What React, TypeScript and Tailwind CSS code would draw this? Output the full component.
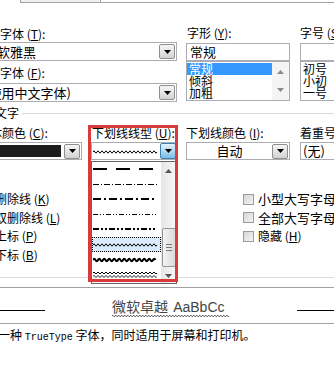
import React from "react";

// smooth wave path, used for the wavy underline samples
function wave(w: number, y: number, a: number, p: number) {
  let d = `M0 ${y} Q${p / 4} ${y - a * 2} ${p / 2} ${y}`;
  for (let x = p; x <= w + 0.01; x += p / 2) d += ` T${x} ${y}`;
  return d;
}

const Tri = ({ up = false, color = "#000" }: { up?: boolean; color?: string }) => (
  <svg width="7" height="4" viewBox="0 0 7 4">
    <path d={up ? "M0 4h7L3.5 0z" : "M0 0h7L3.5 4z"} fill={color} />
  </svg>
);

const DropBtn = ({ pressed = false }: { pressed?: boolean }) => (
  <div
    className={
      pressed
        ? "w-[16px] h-[16px] shrink-0 flex items-center justify-center rounded-[2px] border border-[#3c7fb1] bg-gradient-to-b from-[#e5f4fc] to-[#77bce6]"
        : "w-[16px] h-[15px] shrink-0 flex items-center justify-center rounded-[2px] border border-[#8f8f8f] bg-gradient-to-b from-[#f6f6f6] to-[#d2d2d2]"
    }
  >
    <Tri />
  </div>
);

const Check = () => (
  <div className="w-[11px] h-[11px] shrink-0 border border-[#9c9c9c] bg-gradient-to-br from-[#d6d6d6] to-[#f4f4f4]" />
);

const Line = ({ dash, w = 1, y = 7.5 }: { dash: string; w?: number; y?: number }) => (
  <svg width="64" height="15">
    <line x1="0" y1={y} x2="64" y2={y} stroke="#000" strokeWidth={w} strokeDasharray={dash} />
  </svg>
);

const Wave = ({ w = 1, double = false }: { w?: number; double?: boolean }) => (
  <svg width="64" height="15">
    {double ? (
      <>
        <path d={wave(64, 6, 1, 4)} fill="none" stroke="#000" strokeWidth="1" />
        <path d={wave(64, 9.5, 1, 4)} fill="none" stroke="#000" strokeWidth="1" />
      </>
    ) : (
      <path d={wave(64, 8, 1.2, w > 1 ? 5 : 4)} fill="none" stroke="#000" strokeWidth={w} />
    )}
  </svg>
);

const SmallList = ({ items, selected }: { items: string[]; selected?: number }) => (
  <div className="h-[40px] border border-[#abadb3] bg-white flex">
    <div className="flex-1 pt-[1px]">
      {items.map((t, i) => (
        <div
          key={t}
          className={
            i === selected
              ? "h-[12px] leading-[12px] pl-[2px] bg-[#3399ff] text-white"
              : "h-[12px] leading-[12px] pl-[2px]"
          }
        >
          {t}
        </div>
      ))}
    </div>
    <div className="w-[17px] flex flex-col items-center justify-between py-[8px] bg-[#f4f4f4]">
      <Tri up color="#8a8a8a" />
      <Tri color="#8a8a8a" />
    </div>
  </div>
);

export default function App() {
  return (
    <div className="relative w-[334px] h-[366px] overflow-hidden bg-white text-[12px] leading-[14px] text-black font-['Noto_Sans_CJK_SC',sans-serif]">
      {/* bottom of the tab strip */}
      <div className="flex h-[3px]">
        <div className="ml-[20px] w-[81px] border-x border-b border-[#a3a3a3] bg-[#f0f0f0]" />
        <div className="flex-1 border-b border-[#a3a3a3]" />
      </div>

      {/* fonts / style / size */}
      <div className="flex mt-[23px]">
        <div className="-ml-[24px] w-[201px] shrink-0 pt-[1px]">
          <div className="h-[14px] whitespace-nowrap">
            中文字体 (<u>T</u>):
          </div>
          <div className="ml-[4px] mt-[1px] h-[19px] border border-[#abadb3] flex items-center pl-[3px] pr-[1px]">
            <span className="flex-1 text-[13px] whitespace-nowrap">微软雅黑</span>
            <DropBtn />
          </div>
          <div className="h-[14px] mt-[5px] whitespace-nowrap">
            西文字体 (<u>F</u>):
          </div>
          <div className="ml-[4px] mt-[3px] h-[19px] border border-[#abadb3] flex items-center pl-[3px] pr-[1px]">
            <span className="flex-1 text-[13px] whitespace-nowrap">(使用中文字体)</span>
            <DropBtn />
          </div>
        </div>

        <div className="ml-[9px] w-[104px] shrink-0">
          <div className="h-[14px] pl-[1px]">
            字形 (<u>Y</u>):
          </div>
          <div className="mt-[3px] h-[18px] border border-[#abadb3] pl-[3px] leading-[16px] text-[13px]">常规</div>
          <SmallList items={["常规", "倾斜", "加粗"]} selected={0} />
        </div>

        <div className="ml-[10px] w-[60px] shrink-0">
          <div className="h-[14px] whitespace-nowrap">
            字号 (<u>S</u>):
          </div>
          <div className="mt-[3px] h-[18px] border border-[#abadb3]" />
          <SmallList items={["初号", "小初", "一号"]} />
        </div>
      </div>

      {/* group heading */}
      <div className="flex items-center mt-[4px] h-[14px]">
        <span className="-ml-[29px] whitespace-nowrap">所有文字</span>
        <div className="flex-1 ml-[3px] border-t border-[#d5dce3]" />
      </div>

      {/* colour / underline row */}
      <div className="flex mt-[6px]">
        <div className="-ml-[22px] w-[104px] shrink-0">
          <div className="h-[14px] whitespace-nowrap">
            字体颜色 (<u>C</u>):
          </div>
          <div className="ml-[2px] mt-[2px] h-[18px] border border-[#abadb3] flex items-center pl-[2px] pr-[1px] gap-[3px]">
            <div className="flex-1 h-[12px] bg-[#1c1c1c]" />
            <DropBtn />
          </div>
        </div>

        <div className="ml-[9px] w-[86px] shrink-0">
          <div className="h-[14px] pl-[1px] whitespace-nowrap">
            下划线线型 (<u>U</u>):
          </div>
          <div className="mt-[2px] h-[18px] border border-[#abadb3] flex items-center pl-[1px]">
            <div className="flex-1 h-[15px]">
              <Wave />
            </div>
            <DropBtn pressed />
          </div>
        </div>

        <div className="ml-[9px] w-[104px] shrink-0">
          <div className="h-[14px] whitespace-nowrap">
            下划线颜色 (<u>I</u>):
          </div>
          <div className="mt-[2px] h-[18px] border border-[#abadb3] flex items-center pr-[1px]">
            <span className="flex-1 text-center text-[13px]">自动</span>
            <DropBtn />
          </div>
        </div>

        <div className="ml-[10px] w-[60px] shrink-0">
          <div className="h-[14px] whitespace-nowrap">着重号 (·):</div>
          <div className="mt-[2px] h-[18px] border border-[#abadb3] pl-[2px] leading-[16px] text-[13px]">(无)</div>
        </div>
      </div>

      {/* effects */}
      <div className="flex h-[117px] pt-[32px]">
        <div className="-ml-[5px] w-[248px] shrink-0 flex flex-col gap-[4.5px]">
          <div className="h-[14px]">
            删除线 (<u>K</u>)
          </div>
          <div className="h-[14px]">
            双删除线 (<u>L</u>)
          </div>
          <div className="h-[14px]">
            上标 (<u>P</u>)
          </div>
          <div className="h-[14px]">
            下标 (<u>B</u>)
          </div>
        </div>
        <div className="flex flex-col gap-[4.5px] whitespace-nowrap">
          <div className="h-[14px] flex items-center gap-[4px]">
            <Check />
            <span className="text-[13px]">小型大写字母</span>
          </div>
          <div className="h-[14px] flex items-center gap-[4px]">
            <Check />
            <span className="text-[13px]">全部大写字母</span>
          </div>
          <div className="h-[14px] flex items-center gap-[4px]">
            <Check />
            <span>
              隐藏 (<u>H</u>)
            </span>
          </div>
        </div>
      </div>
      <div className="border-t border-[#d5dce3]" />

      {/* preview */}
      <div className="mt-[9px] h-[37px] border-y border-[#a0a0a0] pt-[10px] flex">
        <div className="w-[45px] h-[13px] border-b border-black" />
        <div className="flex-1 flex justify-center">
          <div className="flex flex-col items-start">
            <span className="text-[14px] leading-[16px] text-[#444] whitespace-nowrap">
              微软卓越 <span className="font-['Liberation_Sans',sans-serif] ml-[2px]">AaBbCc</span>
            </span>
            <svg width="118" height="4" className="-mt-[1px]">
              <path d={wave(118, 2, 0.8, 3)} fill="none" stroke="#444" strokeWidth="1" />
            </svg>
          </div>
        </div>
        <div className="w-[37px] h-[13px] border-b border-black" />
      </div>

      <div className="mt-[4px] -ml-[2px] h-[14px] whitespace-nowrap">
        一种 <span className="font-['Liberation_Mono',monospace] text-[10px]">TrueType</span> 字体，同时适用于屏幕和打印机。
      </div>

      {/* opened underline-style dropdown */}
      <div className="absolute left-[91px] top-[161px] w-[86px] h-[123px] border border-[#646464] bg-white flex">
        <div className="flex-1 pt-[0px]">
          <div className="h-[15px] pl-[1px]"><Line dash="14 9" w={2} y={7} /></div>
          <div className="h-[15px] pl-[1px]"><Line dash="6 2 1 2" /></div>
          <div className="h-[15px] pl-[1px]"><Line dash="8 3 2 3" w={2} y={7} /></div>
          <div className="h-[15px] pl-[1px]"><Line dash="5 2 1 2 1 2" /></div>
          <div className="h-[15px] pl-[1px]"><Line dash="6 2 2 2 2 2" w={2} y={7} /></div>
          <div className="h-[15px] border border-dotted border-black bg-[#d8eafb] flex items-center">
            <Wave />
          </div>
          <div className="h-[15px] pl-[1px]"><Wave w={2} /></div>
          <div className="h-[15px] pl-[1px]"><Wave double /></div>
        </div>
        <div className="w-[15px] flex flex-col items-center bg-gradient-to-r from-[#e6e6e6] to-[#f7f7f7]">
          <div className="h-[17px] flex items-center">
            <Tri up color="#555" />
          </div>
          <div className="mt-[49px] w-[14px] h-[39px] rounded-[2px] border border-[#979797] bg-gradient-to-r from-[#f3f3f3] to-[#dadada] flex flex-col items-center justify-center gap-[2px]">
            <div className="w-[6px] border-t border-[#777]" />
            <div className="w-[6px] border-t border-[#777]" />
            <div className="w-[6px] border-t border-[#777]" />
          </div>
          <div className="flex-1" />
          <div className="h-[14px] flex items-center">
            <Tri color="#555" />
          </div>
        </div>
      </div>

      {/* red highlight */}
      <div className="absolute left-[88px] top-[125px] w-[90px] h-[157px] border-[3px] border-[#d93a3c]" />
    </div>
  );
}
